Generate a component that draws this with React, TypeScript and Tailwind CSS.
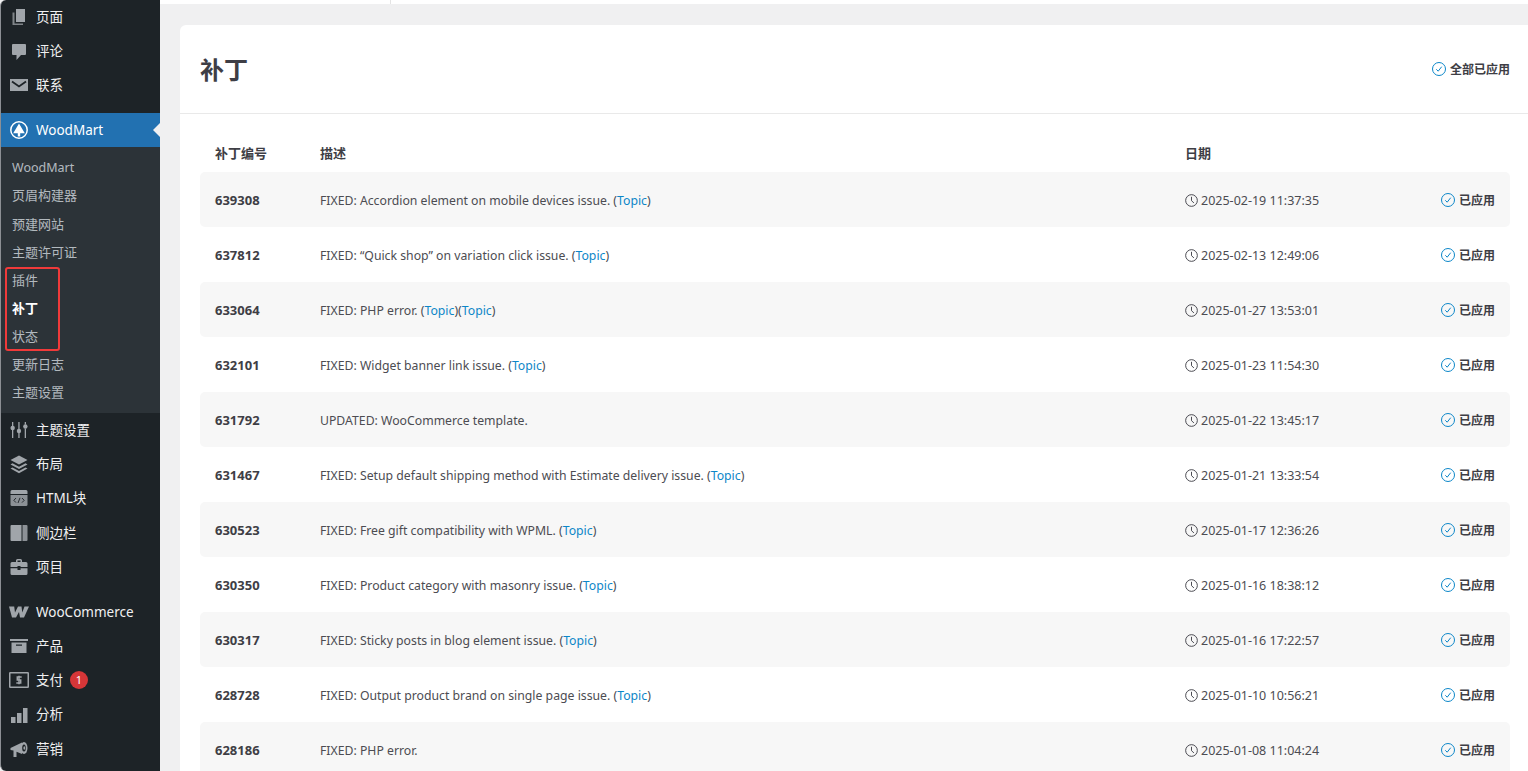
const FONT = "font-['Noto_Sans','Noto_Sans_CJK_SC',sans-serif]";

type Patch = { id: string; text: string; links: number; date: string };

const patches: Patch[] = [
  { id: '639308', text: 'FIXED: Accordion element on mobile devices issue. ', links: 1, date: '2025-02-19 11:37:35' },
  { id: '637812', text: 'FIXED: “Quick shop” on variation click issue. ', links: 1, date: '2025-02-13 12:49:06' },
  { id: '633064', text: 'FIXED: PHP error. ', links: 2, date: '2025-01-27 13:53:01' },
  { id: '632101', text: 'FIXED: Widget banner link issue. ', links: 1, date: '2025-01-23 11:54:30' },
  { id: '631792', text: 'UPDATED: WooCommerce template.', links: 0, date: '2025-01-22 13:45:17' },
  { id: '631467', text: 'FIXED: Setup default shipping method with Estimate delivery issue. ', links: 1, date: '2025-01-21 13:33:54' },
  { id: '630523', text: 'FIXED: Free gift compatibility with WPML. ', links: 1, date: '2025-01-17 12:36:26' },
  { id: '630350', text: 'FIXED: Product category with masonry issue. ', links: 1, date: '2025-01-16 18:38:12' },
  { id: '630317', text: 'FIXED: Sticky posts in blog element issue. ', links: 1, date: '2025-01-16 17:22:57' },
  { id: '628728', text: 'FIXED: Output product brand on single page issue. ', links: 1, date: '2025-01-10 10:56:21' },
  { id: '628186', text: 'FIXED: PHP error.', links: 0, date: '2025-01-08 11:04:24' },
];

const Icon: React.FC<{ children: React.ReactNode }> = ({ children }) => (
  <svg viewBox="0 0 20 20" className="w-5 h-5 text-[#a0a5aa]" fill="currentColor">
    {children}
  </svg>
);

const PageIcon = () => (
  <Icon>
    <path d="M7 2h9v13H7z" />
    <path d="M3.500 5.500H5.500V16.500H14V18H3.500z" opacity="0.75" />
  </Icon>
);
const CommentIcon = () => (
  <Icon>
    <path d="M4 3h12a1 1 0 0 1 1 1v9a1 1 0 0 1-1 1h-4l-4.500 5v-5H4a1 1 0 0 1-1-1V4a1 1 0 0 1 1-1z" />
  </Icon>
);
const MailIcon = () => (
  <svg viewBox="0 0 20 20" className="w-5 h-5" fill="none">
    <rect x="1" y="4" width="18" height="12" fill="#a0a5aa" />
    <path d="M3 6.500l7 5 7-5" stroke="#1d2327" strokeWidth="1.800" />
  </svg>
);
const SlidersIcon = () => (
  <Icon>
    <path d="M3 2h1.300v4H3zM3 10h1.300v8H3zM9.300 2h1.300v7H9.300zM9.300 13h1.300v5H9.300zM15.700 2h1.300v2.500h-1.300zM15.700 8.500h1.300V18h-1.300z" />
    <circle cx="3.650" cy="8" r="2.200" />
    <circle cx="9.950" cy="11" r="2.200" />
    <circle cx="16.350" cy="6.500" r="2.200" />
  </Icon>
);
const LayersIcon = () => (
  <Icon>
    <path d="M10 1.500l8.500 4.500-8.500 4.500L1.500 6z" />
    <path d="M3.500 9.200L10 12.700l6.500-3.500 2 1.200L10 15 1.500 10.400z" />
    <path d="M3.500 13.400L10 16.900l6.500-3.500 2 1.200L10 19.200l-8.500-4.600z" />
  </Icon>
);
const HtmlBlockIcon = () => (
  <svg viewBox="0 0 20 20" className="w-5 h-5">
    <path d="M3 2h14a1.500 1.500 0 0 1 1.500 1.500V6h-17V3.500A1.500 1.500 0 0 1 3 2z" fill="#a0a5aa" />
    <path d="M1.500 7h17v9.500A1.500 1.500 0 0 1 17 18H3a1.500 1.500 0 0 1-1.500-1.500z" fill="#8c9196" />
    <path d="M7 10l-2.200 2.300L7 14.600M13 10l2.200 2.300L13 14.600M11 9.800l-2 5.200" stroke="#1d2327" strokeWidth="0.900" fill="none" />
  </svg>
);
const SidebarIcon = () => (
  <svg viewBox="0 0 20 20" className="w-5 h-5">
    <path d="M2.500 2H12.500V18H2.500A1 1 0 0 1 1.500 17V3A1 1 0 0 1 2.500 2z" fill="#a0a5aa" />
    <path d="M13.500 2H17.500A1 1 0 0 1 18.500 3V17A1 1 0 0 1 17.500 18H13.500z" fill="#8c9196" />
  </svg>
);
const BriefcaseIcon = () => (
  <Icon>
    <path d="M7 5V3.500A1.500 1.500 0 0 1 8.500 2h3A1.500 1.500 0 0 1 13 3.500V5h4a1.500 1.500 0 0 1 1.500 1.500V10h-7V9h-3v1h-7V6.500A1.500 1.500 0 0 1 3 5zm1.500 0h3V3.500h-3z" fillRule="evenodd" />
    <path d="M1.500 11.200h7V13h3v-1.800h7v5.300a1.500 1.500 0 0 1-1.500 1.500H3a1.500 1.500 0 0 1-1.500-1.500z" />
  </Icon>
);
const WooIcon = () => (
  <svg viewBox="0 0 20 12" className="w-5 h-3" fill="#a0a5aa">
    <path d="M0 0.500H5.200L6 6.500 9 0.500H12.500L13.300 6.500 15.500 0.500H20L15 11.500H11L10 6 7 11.500H3z" />
  </svg>
);
const ArchiveIcon = () => (
  <Icon>
    <path d="M1 3h18v2H1z" />
    <path d="M2.500 6.500h15V17h-15zM7 8.500v1.300h6V8.500z" fillRule="evenodd" />
  </Icon>
);
const PaymentIcon = () => (
  <svg viewBox="0 0 20 20" className="w-5 h-5" fill="none">
    <rect x="0.750" y="2.750" width="18.500" height="14.500" rx="0.500" stroke="#a0a5aa" strokeWidth="1.500" />
    <path d="M12.700 7H8.300v3h3.400v3H7.300M10 5.700v8.600" stroke="#a0a5aa" strokeWidth="1.500" />
  </svg>
);
const ChartIcon = () => (
  <Icon>
    <path d="M2 12h4.500v6H2zM8 8h4.500v10H8zM14 3h4.500v15H14z" />
  </Icon>
);
const MegaphoneIcon = () => (
  <Icon>
    <path d="M1.500 9L13 3.500V15L7.500 12.700V18H4.500v-6.500L1.500 11z" />
    <ellipse cx="15" cy="9" rx="3.500" ry="6" fill="#a0a5aa" />
    <ellipse cx="15" cy="9" rx="1.800" ry="3.600" fill="#1d2327" />
    <ellipse cx="15.300" cy="9" rx="0.900" ry="1.800" fill="#a0a5aa" />
  </Icon>
);
const TreeIcon = () => (
  <svg viewBox="0 0 20 20" className="w-5 h-5">
    <circle cx="10" cy="10" r="8.200" fill="none" stroke="#fff" strokeWidth="1.500" />
    <path d="M10 3.500L15.800 13.300H11.200v3.200H8.800v-3.200H4.200z" fill="#fff" />
  </svg>
);

const CheckCircle = () => (
  <svg viewBox="0 0 14 14" className="w-3.5 h-3.5 shrink-0 -translate-y-px" fill="none" stroke="#0c86c8" strokeWidth="1">
    <circle cx="7" cy="7" r="6.500" />
    <path d="M4.300 7.300l1.900 1.900 3.500-4.500" />
  </svg>
);
const Clock = () => (
  <svg viewBox="0 0 14 14" className="w-[13px] h-[13px] shrink-0" fill="none" stroke="#3e3e45" strokeWidth="1">
    <circle cx="7" cy="7" r="6.300" />
    <path d="M7 3v4.200l2.600 2.400" />
  </svg>
);

type MenuRowProps = {
  icon: React.ReactNode;
  label: string;
  badge?: string;
  className?: string;
};

const MenuRow: React.FC<MenuRowProps> = ({ icon, label, badge, className }) => (
  <div className={`flex items-center h-[34.200px] text-[13.500px] text-[#f0f0f1] ${className ?? ''}`}>
    <div className="w-[35px] flex justify-center shrink-0">{icon}</div>
    <span>{label}</span>
    {badge && (
      <span className="ml-[7px] w-[18px] h-[18px] rounded-full bg-[#d63638] text-white text-[11px] flex items-center justify-center">
        {badge}
      </span>
    )}
  </div>
);

const subItems = ['WoodMart', '页眉构建器', '预建网站', '主题许可证', '插件', '补丁', '状态', '更新日志', '主题设置'];

const Sidebar = () => (
  <aside className="relative w-40 shrink-0 h-full bg-[#1d2327] border-l border-[#8c8f94] rounded-tl-md rounded-bl-md overflow-hidden">
    <MenuRow icon={<PageIcon />} label="页面" className="h-[34px]" />
    <MenuRow icon={<CommentIcon />} label="评论" className="h-[34px]" />
    <MenuRow icon={<MailIcon />} label="联系" className="h-[34px]" />
    <div className="relative mt-[11px] h-[34px] bg-[#2271b1] flex items-center text-[13.500px] text-white">
      <div className="w-[35px] flex justify-center shrink-0">
        <TreeIcon />
      </div>
      <span>WoodMart</span>
      <div className="absolute right-0 top-[10px] border-y-[7px] border-y-transparent border-r-[7px] border-r-[#f0f0f1]" />
    </div>
    <div className="h-[266px] bg-[#2c3338] pt-[7px] pl-[11px] text-[13px] text-[#f0f6fcb3]">
      {subItems.map((item, i) => (
        <div
          key={item + i}
          className={`h-[28.150px] flex items-center ${item === '补丁' ? 'text-white font-bold' : ''} ${i === 0 ? 'text-[12.500px]' : ''}`}
        >
          {item}
        </div>
      ))}
    </div>
    <div>
      <MenuRow icon={<SlidersIcon />} label="主题设置" />
      <MenuRow icon={<LayersIcon />} label="布局" />
      <MenuRow icon={<HtmlBlockIcon />} label="HTML块" />
      <MenuRow icon={<SidebarIcon />} label="侧边栏" />
      <MenuRow icon={<BriefcaseIcon />} label="项目" />
    </div>
    <div className="mt-[11px]">
      <MenuRow icon={<WooIcon />} label="WooCommerce" />
      <MenuRow icon={<ArchiveIcon />} label="产品" />
      <MenuRow icon={<PaymentIcon />} label="支付" badge="1" />
      <MenuRow icon={<ChartIcon />} label="分析" />
      <MenuRow icon={<MegaphoneIcon />} label="营销" />
    </div>
    {/* red annotation drawn on top of the screenshot */}
    <div className="absolute left-[4px] top-[267px] w-[55px] h-[84px] border-2 border-[#f03a3a] rounded-[3px]" />
  </aside>
);

const Status = () => (
  <div className="flex items-center gap-1 pt-[3px] text-xs font-semibold text-[#3e3e45]">
    <CheckCircle />
    <span>已应用</span>
  </div>
);

const TopicLink = () => (
  <>
    (<span className="text-[#0c86c8]">Topic</span>)
  </>
);

const PatchRow: React.FC<{ patch: Patch; striped: boolean }> = ({ patch, striped }) => (
  <div className={`flex items-center h-[55px] shrink-0 rounded-[5px] pl-[15px] pr-[15px] text-[12.500px] text-[#4c4c52] ${striped ? 'bg-[#f7f7f7]' : ''}`}>
    <div className="w-[105px] pt-[2px] font-bold text-[13px] text-[#3e3e45]">{patch.id}</div>
    <div className="flex-1 pt-[3px] text-[12.250px]">
      {patch.text}
      {Array.from({ length: patch.links }).map((_, i) => (
        <TopicLink key={i} />
      ))}
    </div>
    <div className="w-[256px] pt-[2px] flex items-center gap-[3px]">
      <Clock />
      <span className="pt-px">{patch.date}</span>
    </div>
    <div className="w-[54px] flex justify-end">
      <Status />
    </div>
  </div>
);

export default function App() {
  return (
    <div className={`flex h-screen overflow-hidden bg-[#f0f0f1] ${FONT}`}>
      <Sidebar />
      <main className="flex-1 min-w-0 flex flex-col">
        <div className="h-1 bg-white flex shrink-0">
          <div className="ml-[230px] w-px bg-[#e4e4e4]" />
        </div>
        <div className="mt-[21px] ml-5 flex-1 bg-white rounded-tl-md flex flex-col min-h-0">
          <header className="h-[89px] shrink-0 border-b border-[#e9e9e9] flex items-center justify-between pl-5 pr-[18px]">
            <h1 className="pt-[2px] text-[24px] font-bold text-[#3e3e45]">补丁</h1>
            <div className="flex items-center gap-1 pt-[2px] text-xs font-semibold text-[#3e3e45]">
              <CheckCircle />
              <span>全部已应用</span>
            </div>
          </header>
          <div className="pl-5 pr-[18px] flex flex-col flex-1 min-h-0">
            <div className="flex items-center h-[58px] shrink-0 pt-[22px] pl-[15px] pr-[15px] text-[13px] font-semibold text-[#3e3e45]">
              <div className="w-[105px]">补丁编号</div>
              <div className="flex-1">描述</div>
              <div className="w-[310px]">日期</div>
            </div>
            {patches.map((patch, i) => (
              <PatchRow key={patch.id} patch={patch} striped={i % 2 === 0} />
            ))}
          </div>
        </div>
      </main>
    </div>
  );
}
